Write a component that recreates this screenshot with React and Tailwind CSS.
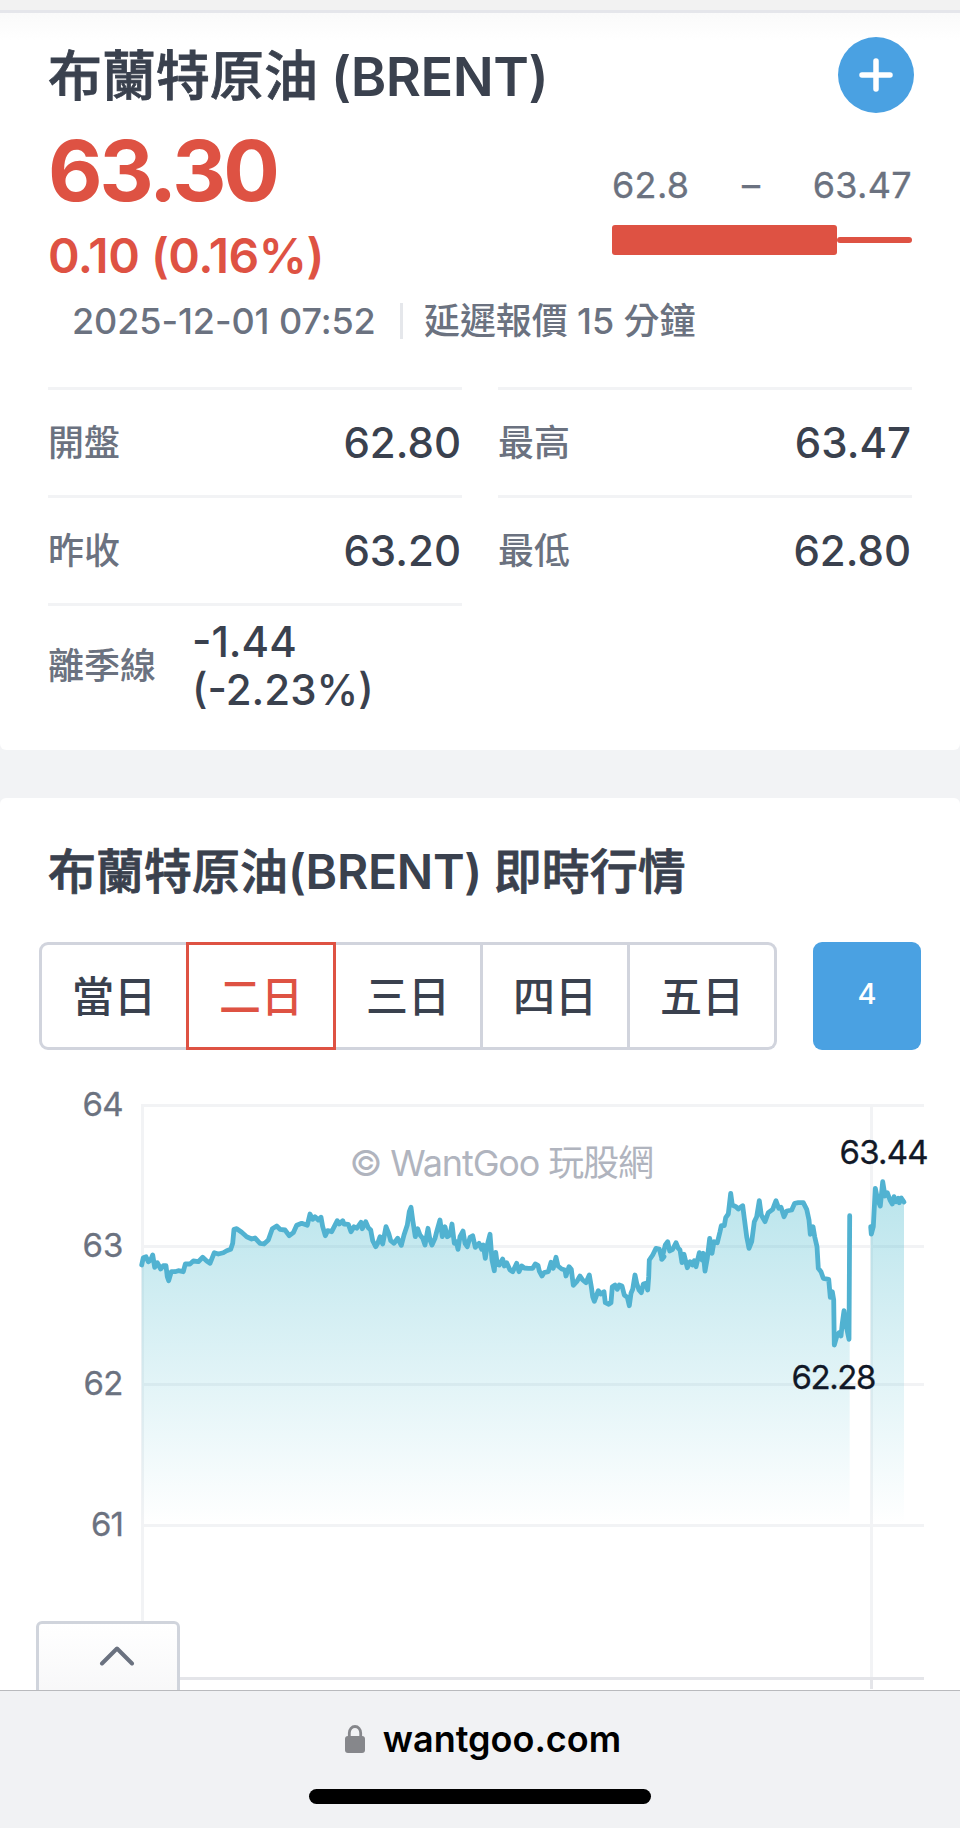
import React from "react";

// Price samples, in thirds of a pixel relative to each run's origin.
const RUN_A = [
  [245,555],[250,533],[258,530],[265,545],[272,540],[278,525],[284,562],[292,548],[302,567],[310,557],[318,557],[322,590],[326,602],[334,575],[345,575],[355,572],[370,575],[376,552],[390,552],[400,543],[415,545],[428,532],[440,543],[450,550],[463,518],[475,522],[490,518],[500,512],[512,508],[518,490],[522,448],[530,446],[545,457],[560,470],[575,477],[585,474],[600,490],[612,492],[625,480],[637,446],[650,438],[660,448],[675,450],[688,467],[700,458],[710,436],[725,430],[742,436],[750,402],[758,418],[765,410],[775,420],[783,412],[788,440],[796,467],[803,452],[815,455],[832,422],[838,432],[848,422],[852,432],[865,433],[873,455],[882,440],[890,445],[903,427],[907,446],[917,425],[925,443],[932,450],[938,482],[947,500],[953,490],
];
const RUN_B = [
  [0,290],[8,312],[18,260],[26,280],[32,302],[42,310],[53,295],[64,316],[72,285],[82,255],[88,215],[93,202],[98,240],[106,290],[113,266],[120,285],[128,295],[135,315],[144,265],[150,300],[156,315],[165,295],[170,275],[180,240],[187,290],[195,260],[202,290],[210,285],[216,252],[223,310],[229,305],[234,328],[240,290],[249,273],[255,310],[262,320],[270,292],[278,287],[286,322],[297,310],[305,328],[310,315],[316,355],[323,310],[330,283],[336,360],[343,392],[347,337],[352,372],[358,375],[368,357],[373,378],[380,368],[390,390],[398,395],[410,370],[417,395],[425,378],[433,384],[445,385],[458,385],[466,372],[474,376],[478,393],[486,408],[492,398],[505,395],[513,367],[520,385],[528,352],[534,378],[545,387],[555,390],[558,408],[567,380],[574,388],[580,436],[590,425],[600,408],[608,420],[618,428],[628,405],[634,440],[638,470],[643,484],[655,452],[662,462],[672,455],[676,488],[686,493],[693,488],[697,440],[705,435],[712,448],[718,435],[726,438],[733,465],[742,472],[748,497],[753,460],[758,448],[765,405],[770,430],[777,450],[784,458],[790,432],[797,430],[803,450],[806,410],[808,360],[818,345],[828,325],[838,327],[846,358],[852,350],
];
const RUN_C = [
  [5,508],[16,465],[23,455],[29,483],[38,478],[48,458],[55,475],[60,480],[66,518],[72,493],[82,533],[90,515],[97,525],[103,512],[108,530],[118,488],[126,510],[130,490],[135,543],[142,505],[149,445],[156,490],[162,455],[172,458],[180,425],[184,407],[193,407],[197,383],[205,372],[212,310],[217,345],[228,350],[235,357],[248,347],[253,385],[260,440],[267,475],[275,455],[283,395],[290,380],[298,332],[304,375],[315,395],[325,368],[338,358],[348,332],[356,355],[363,352],[372,380],[380,363],[395,360],[404,340],[415,338],[430,338],[440,358],[447,390],[451,433],[459,410],[464,440],[471,470],[475,535],[483,545],[490,565],[506,568],[511,622],[517,605],[521,630],[523,765],[530,740],[537,728],[543,738],[547,700],[552,662],[558,705],[567,748],[569,377],
];
const RUN_D = [
  [632,410],[634,432],[640,410],[646,295],[653,330],[661,348],[668,275],[675,318],[682,308],[690,330],[697,342],[702,320],[708,335],[715,325],[718,338],[724,324],[732,336],
];

const place = (run, ox, oy) => run.map(([x, y]) => [ox + x / 3, oy + y / 3]);
const toPath = (pts) => "M" + pts.map(([x, y]) => `${x.toFixed(1)} ${y.toFixed(1)}`).join("L");

const sessionOne = [
  ...place(RUN_A, 60, 0),
  ...place(RUN_B, 380, 60),
  ...place(RUN_C, 660, 10),
];
const sessionTwo = place(RUN_D, 660, 10);

function Area({ pts }) {
  const x0 = pts[0][0];
  const x1 = pts[pts.length - 1][0];
  return (
    <>
      <path d={`${toPath(pts)}L${x1} 444L${x0} 444Z`} fill="url(#area)" />
      <path d={toPath(pts)} fill="none" stroke="#51b2d1" strokeWidth="4.800" strokeLinejoin="round" strokeLinecap="round" />
    </>
  );
}

function Chart() {
  return (
    <svg width="960" height="610" viewBox="0 0 960 610" className="block">
      <defs>
        <linearGradient id="area" gradientUnits="userSpaceOnUse" x1="0" y1="103" x2="0" y2="444">
          <stop offset="0" stopColor="#50bccf" stopOpacity="0.4" />
          <stop offset="1" stopColor="#50bccf" stopOpacity="0" />
        </linearGradient>
      </defs>
      <g fill="#f2f3f5">
        <rect x="141" y="24" width="783" height="3" />
        <rect x="144" y="165" width="780" height="3" />
        <rect x="144" y="303" width="780" height="3" />
        <rect x="144" y="444" width="780" height="3" />
        <rect x="141" y="27" width="3" height="570" />
        <rect x="870" y="27" width="3" height="570" />
      </g>
      <rect x="141" y="597" width="783" height="3" fill="#e4e5e9" />
      <rect x="870" y="600" width="3" height="9" fill="#e4e5e9" />
      <Area pts={sessionOne} />
      <Area pts={sessionTwo} />
      <g fontSize="33" fill="#6b7280" stroke="#6b7280" strokeWidth="0.300" textAnchor="end">
        <text x="123.500" y="36" textLength="41">64</text>
        <text x="123.500" y="176.500" textLength="41">63</text>
        <text x="123.500" y="314.500" textLength="40">62</text>
        <text x="124" y="456" textLength="33">61</text>
      </g>
      <text x="349.500" y="95.700" fontSize="36" fill="#b0b4be" textLength="304.500">© WantGoo 玩股網</text>
      <g fontSize="33" fill="#111827" stroke="#111827" strokeWidth="0.300">
        <text x="839.500" y="84" textLength="89">63.44</text>
        <text x="791.500" y="308.500" textLength="85">62.28</text>
      </g>
    </svg>
  );
}

function Stat({ label, value }) {
  return (
    <div className="flex h-[108px] items-center justify-between border-t-[3px] border-[#f2f3f5]">
      <span className="text-[36px] font-medium leading-[48px] text-[#6b7280]">{label}</span>
      <span className="pr-px text-[42px] font-medium leading-[48px] text-[#3a414e]">{value}</span>
    </div>
  );
}

function Quote() {
  return (
    <section className="h-[737px] rounded-b-[6px] bg-white bg-linear-to-b from-[#fafafa] to-white to-[27px] px-12 pt-6">
      <div className="flex h-[76px] items-center justify-between">
        <h1 className="pt-[3px] text-[54px] font-medium leading-[76px] text-[#3a414e]">
          <span className="[-webkit-text-stroke:0.8px_#3a414e]">布蘭特原油</span>
          <span className="font-semibold tracking-[-0.5px]"> (BRENT)</span>
        </h1>
        <button className="mr-[-2px] flex size-[76px] items-center justify-center rounded-full bg-[#4aa1e2]">
          <svg width="36" height="36" viewBox="0 0 36 36" stroke="#fff" strokeWidth="5.500" strokeLinecap="round">
            <path d="M18 4v28M4 18h28" />
          </svg>
        </button>
      </div>
      <div className="mt-[15px] flex justify-between">
        <div className="text-[#de5243]">
          <div className="text-[84px] font-bold leading-[86px] tracking-[-3px]">63.30</div>
          <div className="mt-[12px] text-[48px] font-semibold leading-[60px] tracking-[-0.5px]">0.10 (0.16%)</div>
        </div>
        <div className="w-[300px] pt-[33px]">
          <div className="flex h-[48px] items-center justify-between text-[36px] leading-[48px] tracking-[0.3px] text-[#6b7280] [-webkit-text-stroke:0.3px_#6b7280]">
            <span>62.8</span>
            <span>–</span>
            <span>63.47</span>
          </div>
          <div className="mt-[16px] flex items-center">
            <div className="h-[30px] w-[225px] rounded-[3px] bg-[#de5243]" />
            <div className="h-[6px] w-[75px] rounded-[3px] bg-[#de5243]" />
          </div>
        </div>
      </div>
      <div className="mt-[17px] flex h-9 items-center pl-6 text-[36px] font-medium leading-[34px] tracking-[-0.1px] text-[#6b7280]">
        <span className="w-[304px] whitespace-nowrap">2025-12-01 07:52</span>
        <span className="ml-6 mr-[21px] h-9 w-[3px] bg-[#e5e7eb]" />
        <span>延遲報價 15 分鐘</span>
      </div>
      <div className="mt-12 grid grid-cols-2 gap-x-9">
        <Stat label="開盤" value="62.80" />
        <Stat label="最高" value="63.47" />
        <Stat label="昨收" value="63.20" />
        <Stat label="最低" value="62.80" />
        <div className="flex h-[122px] items-center border-t-[3px] border-[#f2f3f5]">
          <span className="w-[144px] text-[36px] font-medium leading-[48px] text-[#6b7280]">離季線</span>
          <span className="text-[42px] font-medium leading-[48px] text-[#3a414e]">
            -1.44
            <br />
            (-2.23%)
          </span>
        </div>
      </div>
    </section>
  );
}

function RangeTabs() {
  const base = "flex h-[108px] items-center justify-center border-[3px] pt-px text-[42px] font-medium leading-[48px] ";
  const idle = "border-[#d1d4dd] text-[#3a414e] ";
  return (
    <div className="mt-[36px] flex pl-[39px]">
      <div className="flex">
        <button className={base + idle + "w-[150px] rounded-l-[9px]"}>當日</button>
        <button className={base + "relative -ml-[3px] w-[150px] border-[#de5243] text-[#de5243]"}>二日</button>
        <button className={base + idle + "w-[147px] border-l-0"}>三日</button>
        <button className={base + idle + "w-[147px] border-l-0"}>四日</button>
        <button className={base + idle + "w-[147px] rounded-r-[9px] border-l-0"}>五日</button>
      </div>
      <button className="ml-9 flex size-[108px] items-center justify-center rounded-[9px] bg-[#4aa1e2] pb-1 text-[29px] font-medium leading-[36px] text-white">
        4
      </button>
    </div>
  );
}

function BrowserBar() {
  return (
    <footer className="flex h-[138px] flex-col items-center border-t border-[#b9babd] bg-[#f1f2f4] pt-[24px]">
      <div className="flex h-[48px] items-center gap-[18px] pl-[6px]">
        <svg width="20" height="28" viewBox="0 0 20 28">
          <path d="M4.300 13V8a5.700 6.500 0 0 1 11.400 0v5" fill="none" stroke="#86878b" strokeWidth="2.800" />
          <rect x="0" y="11" width="20" height="17" rx="3" fill="#86878b" />
        </svg>
        <span className="text-[36px] font-semibold leading-[48px] text-black">wantgoo.com</span>
      </div>
      <div className="mt-[26px] h-[15px] w-[342px] rounded-full bg-black" />
    </footer>
  );
}

export default function App() {
  return (
    <div className="h-[1828px] w-[960px] overflow-hidden bg-[#f2f3f5] font-['Inter','Noto_Sans_CJK_TC',sans-serif]">
      <div className="h-[13px] border-b-[3px] border-[#e5e6eb] bg-[#f2f2f2]" />
      <Quote />
      <section className="relative mt-12 h-[892px] overflow-hidden rounded-t-[6px] bg-white pt-[40px]">
        <h2 className="pl-12 text-[48px] font-medium leading-[68px] text-[#3a414e]">
          <span className="[-webkit-text-stroke:0.8px_#3a414e]">布蘭特原油</span>
          <span className="font-semibold tracking-[-0.3px]">(BRENT) </span>
          <span className="[-webkit-text-stroke:0.8px_#3a414e]">即時行情</span>
        </h2>
        <RangeTabs />
        <div className="mt-[30px]">
          <Chart />
        </div>
        <button className="absolute left-9 top-[823px] flex h-[80px] w-[144px] justify-center rounded-t-[6px] border-[3px] border-[#d0d4dc] bg-linear-to-b from-white to-[#f7f7f8] pl-[18px] pt-[22px]">
          <svg width="36" height="20" viewBox="0 0 36 20" fill="none" stroke="#6b7280" strokeWidth="4" strokeLinecap="round" strokeLinejoin="round">
            <path d="M3 17.500L18 2.500L33 17.500" />
          </svg>
        </button>
      </section>
      <BrowserBar />
    </div>
  );
}
